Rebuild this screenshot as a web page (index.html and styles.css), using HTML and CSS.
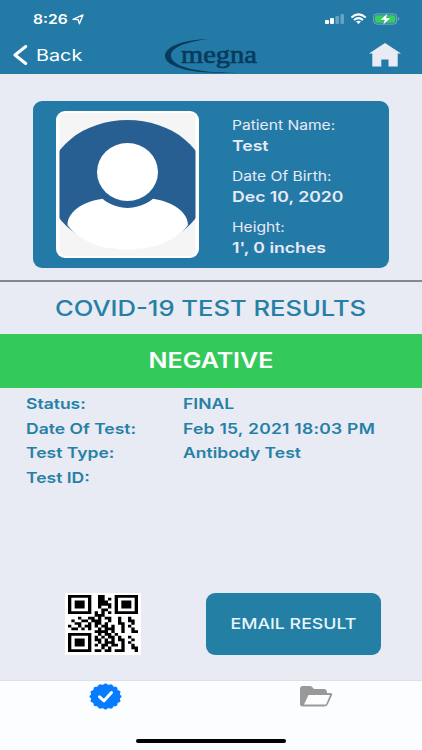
FILE: index.html
```html
<!DOCTYPE html>
<html lang="en">
<head>
    <meta charset="UTF-8">
    <title>Test Results</title>
    <link rel="stylesheet" href="styles.css">
</head>

<body>
    <div class="header">
        <div class="status-bar">
            <span class="wide time">8:26</span>
            <svg class="location" width="12" height="11" viewBox="0 0 12 11"><path d="M1 5.3L11 .9L7.4 9.8L6.2 5.6Z" fill="none" stroke="#fff" stroke-width="1.3" stroke-linejoin="round"/></svg>
            <svg class="status-icons" width="76" height="12" viewBox="0 0 76 12">
                <g fill="#fff">
                    <rect x="0" y="7" width="4" height="4" rx="1"/>
                    <rect x="5" y="5" width="4" height="6" rx="1"/>
                    <g opacity=".3"><rect x="10.4" y="3" width="3.6" height="8" rx="1"/><rect x="15.4" y="1" width="3.6" height="10" rx="1"/></g>
                </g>
                <g fill="none" stroke="#fff" stroke-width="2">
                    <path d="M26.4 4.4Q33.5-1.6 40.7 4.4"/>
                    <path d="M29 7Q33.5 3.3 38 7"/>
                </g>
                <path d="M31 8.6Q33.5 6.8 36 8.6L33.5 11Z" fill="#fff"/>
                <rect x="48.7" y=".9" width="23" height="10.2" rx="3" fill="none" stroke="#75abc8"/>
                <rect x="50" y="2.2" width="20.4" height="7.6" rx="1.8" fill="#34d058"/>
                <path d="M73 4Q75.6 5.8 73 7.8Z" fill="#75abc8"/>
                <path d="M62.6 .2L55.2 7H59.5L58 11.9L65.8 4.9H61.3Z" fill="#fff" stroke="#247aa7" stroke-width=".3"/>
            </svg>
        </div>
        <div class="nav-bar">
            <a class="back">
                <svg width="15" height="20" viewBox="0 0 15 20"><path d="M12.7 1.5L2 10L12.7 18.5" fill="none" stroke="#fff" stroke-width="3" stroke-linecap="round" stroke-linejoin="round"/></svg>
                <span class="wide back-text">Back</span>
            </a>
            <svg class="logo" width="94" height="36" viewBox="0 0 94 36">
                <path d="M43 1C14 2 0 10 0 18C0 29 28 37 72 34.5C32 35 7 29 6 18C5 10 20 4 43 1Z" fill="#073a5b"/>
                <text class="logo-text" x="16" y="24.5" textLength="76" lengthAdjust="spacingAndGlyphs">megna</text>
            </svg>
            <svg class="home" width="32" height="24" viewBox="0 0 32 24"><path d="M16 0L32 10.4H28.7V23.5H19.5V16.5H12.3V23.5H3.3V10.4H0Z" fill="#e8ebf3"/></svg>
        </div>
    </div>

    <div class="patient">
        <div class="card">
            <svg class="avatar" width="143" height="147" viewBox="56 111 143 147">
                <defs>
                    <clipPath id="photo"><rect x="59.5" y="113" width="136" height="143" rx="5"/></clipPath>
                </defs>
                <rect x="56" y="111" width="143" height="147" rx="9" fill="#fff"/>
                <g clip-path="url(#photo)">
                    <rect x="59" y="113" width="137" height="143" fill="#f5f5f5"/>
                    <ellipse cx="127.5" cy="184.5" rx="80" ry="64.5" fill="#285f92"/>
                    <path d="M67.5 225C67.5 213 81 202 102.5 198.8C117 211 138 211 153 198.8C174 202 188 213 188 225C174 244 149 249.5 127.5 249.5C106 249.5 81 244 67.5 225Z" fill="#fff"/>
                    <ellipse cx="127.5" cy="172" rx="30.5" ry="29" fill="#fff"/>
                </g>
            </svg>
            <div class="info">
                <p class="wide label">Patient Name:</p>
                <p class="wide value">Test</p>
                <p class="wide label">Date Of Birth:</p>
                <p class="wide value">Dec 10, 2020</p>
                <p class="wide label">Height:</p>
                <p class="wide value">1', 0 inches</p>
            </div>
        </div>
    </div>

    <div class="title"><span class="wide">COVID-19 TEST RESULTS</span></div>
    <div class="result"><span class="wide">NEGATIVE</span></div>

    <div class="details">
        <span class="wide">Status:</span><span class="wide">FINAL</span>
        <span class="wide">Date Of Test:</span><span class="wide date">Feb 15, 2021 18:03 PM</span>
        <span class="wide">Test Type:</span><span class="wide">Antibody Test</span>
        <span class="wide">Test ID:</span>
    </div>

    <div class="actions">
        <div class="qr"><svg id="qr" width="70" height="57" viewBox="0 0 21 21" preserveAspectRatio="none"></svg></div>
        <button class="email-button"><span class="wide">EMAIL RESULT</span></button>
    </div>

    <div class="tab-bar">
        <div class="tabs">
            <svg class="badge" width="33" height="27" viewBox="0 0 33 27">
                <path id="seal" fill="#087cff"/>
                <path d="M10.5 13.8L15 17.8L22.5 9.5" fill="none" stroke="#fff" stroke-width="3" stroke-linecap="round" stroke-linejoin="round"/>
            </svg>
            <svg class="folder" width="33" height="21" viewBox="0 0 33 21">
                <path d="M0 18V3Q0 0 3 0H10Q12 0 13 2L14 3H24Q27 3 27 7H30Q33 7 32 9L28 18Q27 20.5 24 20.5H3Q0 20.5 0 18Z" fill="#999"/>
                <path d="M8.5 9H30L26 18.5H4Z" fill="#fcfdff"/>
            </svg>
        </div>
        <div class="home-indicator"></div>
    </div>

    <script src="script.js"></script>
</body>
</html>
```

FILE: styles.css
```css
* {
    box-sizing: border-box;
}
body {
    margin: 0;
    height: 750px;
    display: flex;
    flex-direction: column;
    overflow: hidden;
    background-color: #E8EBF3;
    color: #2680A6;
    font-family: Inter, "Liberation Sans", sans-serif;
}
svg {
    display: block;
    flex-shrink: 0;
}
p {
    margin: 0;
}
/* extended lettering */
.wide {
    display: inline-block;
    white-space: nowrap;
    transform: scaleX(1.2);
    transform-origin: left center;
}
/* header */
.header {
    height: 74px;
    background-color: #247AA7;
    color: #fff;
}
.status-bar {
    display: flex;
    height: 38px;
    padding-left: 33px;
    align-items: center;
}
.time {
    width: 39px;
    font-size: 13px;
    font-weight: 600;
}
.status-icons {
    margin-left: 241px;
}
.nav-bar {
    display: flex;
    height: 36px;
    padding-left: 13px;
}
.back {
    display: flex;
    width: 152px;
    height: 34px;
    align-items: center;
}
.back-text {
    margin-left: 8px;
    font-size: 16.5px;
}
.logo-text {
    font-family: "Liberation Serif", serif;
    font-size: 26px;
    fill: #073A5B;
    stroke: #073A5B;
    stroke-width: 0.7px;
}
.home {
    margin: 5px 0 0 110px;
}
/* patient card */
.patient {
    height: 208px;
    padding: 27px 33px 0;
    border-bottom: 2px solid #858789;
}
.card {
    display: flex;
    height: 167px;
    padding: 10px 23px;
    border-radius: 9px;
    background-color: #247AA7;
    color: #E8EBF3;
}
.info {
    display: flex;
    flex-direction: column;
    align-items: flex-start;
    margin-left: 33px;
    padding-top: 4px;
    font-size: 13px;
    line-height: 21px;
}
.value {
    margin-bottom: 9px;
    font-size: 14.7px;
    font-weight: 600;
}
/* results */
.title {
    height: 52px;
    line-height: 52px;
    text-align: center;
    font-size: 21.3px;
    font-weight: 500;
}
.result {
    height: 54px;
    line-height: 54px;
    background-color: #34C95B;
    color: #fff;
    text-align: center;
    font-size: 20.8px;
    font-weight: 600;
}
.title .wide,
.result .wide,
.email-button .wide {
    transform-origin: center;
}
.details {
    display: grid;
    grid-template-columns: 157px 1fr;
    grid-auto-rows: 24.7px;
    justify-items: start;
    height: 205px;
    padding: 4px 0 0 26px;
    line-height: 25px;
    font-size: 14.6px;
    font-weight: 600;
}
.date {
    letter-spacing: 0.2px;
}
.actions {
    display: flex;
    height: 87px;
    padding-left: 65px;
}
.qr {
    width: 76px;
    height: 62px;
    padding: 2px 3px 3px;
    background-color: #fff;
}
.email-button {
    width: 175px;
    height: 62px;
    margin-left: 65px;
    padding: 0;
    border: none;
    border-radius: 9px;
    background-color: #247FA4;
    color: #E8F5FC;
    font-family: inherit;
    font-size: 14.8px;
    font-weight: 500;
}
/* bottom tabs */
.tab-bar {
    height: 70px;
    border-top: 1px solid #DDDFE4;
    background-color: #FCFDFF;
}
.tabs {
    display: flex;
    height: 58px;
    padding-left: 89px;
}
.badge {
    margin-top: 2px;
}
.folder {
    margin: 5px 0 0 178px;
}
.home-indicator {
    width: 150px;
    height: 4px;
    margin: 0 auto;
    border-radius: 2px;
    background-color: #000;
}
```

FILE: script.js
```js
// qr modules, one string per row
var rows = [
    '#######..##...#######',
    '#.....#..##.#.#.....#',
    '#.###.#..###..#.###.#',
    '#.###.#..####.#.###.#',
    '#.###.#..#..#.#.###.#',
    '#.....#...##..#.....#',
    '#######.#.#.#.#######',
    '........###..........',
    '...#..##.#.##..#..#..',
    '.#..##.###..#..#..##.',
    '..##..#.##.#...##..#.',
    '#..#.##.#.##.#..#.#..',
    '.##.#.#..#.###..#..#.',
    '........####.#..#..##',
    '#######..#.##.#......',
    '#.....#.#.#.##.#..#..',
    '#.###.#.##.#.#.##..#.',
    '#.###.#..#.###..#.#..',
    '#.###.#.#.##.##.#..#.',
    '#.....#...#.#...#..##',
    '#######.##.##.###...#'
];
var d = '';
rows.forEach(function (row, y) {
    for (var x = 0; x < row.length; x++) {
        if (row[x] === '#') {
            d += 'M' + x + ' ' + y + 'h1v1h-1z';
        }
    }
});
document.getElementById('qr').innerHTML = '<path d="' + d + '"/>';

// scalloped edge of the badge
var points = [];
for (var i = 0; i < 144; i++) {
    var a = i / 144 * Math.PI * 2;
    var r = 1 + 0.045 * Math.cos(a * 16);
    points.push((16.5 + 15.4 * r * Math.sin(a)).toFixed(2) + ' ' + (13.5 - 12.5 * r * Math.cos(a)).toFixed(2));
}
document.getElementById('seal').setAttribute('d', 'M' + points.join('L') + 'Z');
```
